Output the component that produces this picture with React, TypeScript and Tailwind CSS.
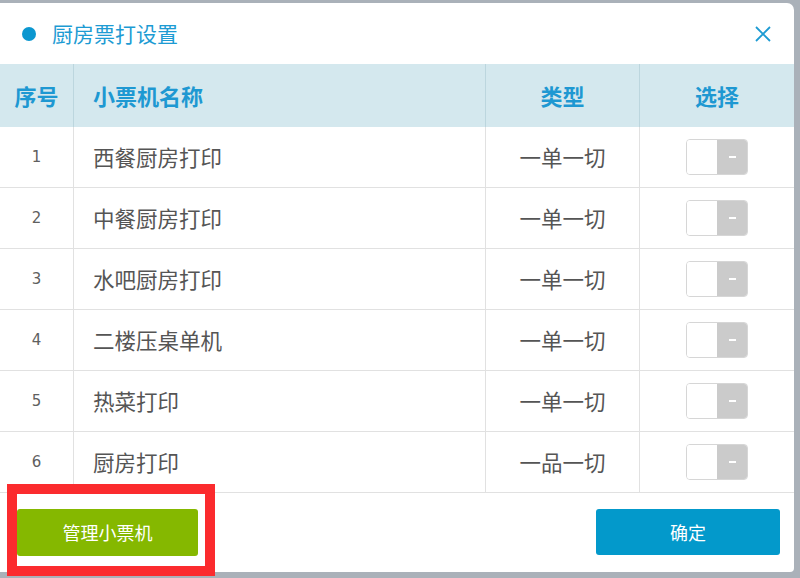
import React from "react";

const rows = [
  { n: "1", name: "西餐厨房打印", type: "一单一切" },
  { n: "2", name: "中餐厨房打印", type: "一单一切" },
  { n: "3", name: "水吧厨房打印", type: "一单一切" },
  { n: "4", name: "二楼压桌单机", type: "一单一切" },
  { n: "5", name: "热菜打印", type: "一单一切" },
  { n: "6", name: "厨房打印", type: "一品一切" },
];

const cjk = { fontFamily: '"Noto Sans CJK SC", "Noto Sans", sans-serif' };
const num = { fontFamily: '"DejaVu Sans", "Noto Sans CJK SC", sans-serif' };

function Toggle() {
  return (
    <div className="flex h-[36px] w-[62px] overflow-hidden rounded-[4px] border border-[#d6d6d6]">
      <div className="w-[30px] bg-white" />
      <div className="flex flex-1 items-center justify-center bg-[#cbcbcb]">
        <div className="h-[2px] w-[7px] bg-white" />
      </div>
    </div>
  );
}

export default function App() {
  return (
    <div className="relative h-[578px] w-[800px] overflow-hidden bg-[#aab1b9]" style={cjk}>
      <div className="pt-[3px]">
        <div className="flex h-[569px] w-[794px] flex-col overflow-hidden rounded-tr-[7px] rounded-br-[4px] bg-white">
          {/* header */}
          <div className="flex h-[61px] items-center pl-[22px] pr-[20px]">
            <div className="h-[14px] w-[14px] rounded-full bg-[#0b97d0]" />
            <div className="ml-[16px] text-[21px] leading-none text-[#1d9bd3]">厨房票打设置</div>
            <div className="flex-1" />
            <svg width="18" height="18" viewBox="0 0 18 18" className="mr-[2px]">
              <path d="M2 2 L16 16 M16 2 L2 16" stroke="#1d9bd3" strokeWidth="1.8" />
            </svg>
          </div>
          {/* table head */}
          <div className="grid h-[63px] grid-cols-[74px_412px_154px_154px] bg-[#d4e8ee] text-[22px] font-bold text-[#1e98d2]">
            <div className="flex items-center justify-center border-r border-[#bcd6de]">序号</div>
            <div className="flex items-center border-r border-[#bcd6de] pl-[19px]">小票机名称</div>
            <div className="flex items-center justify-center border-r border-[#bcd6de]">类型</div>
            <div className="flex items-center justify-center">选择</div>
          </div>
          {rows.map((r) => (
            <div
              key={r.n}
              className="grid h-[61px] grid-cols-[74px_412px_154px_154px] border-b border-[#e1e1e1] text-[#555555]"
            >
              <div className="flex items-center justify-center border-r border-[#e1e1e1] text-[15px] text-[#606060]" style={num}>
                {r.n}
              </div>
              <div className="flex items-center border-r border-[#e1e1e1] pl-[19px] text-[21.5px]">{r.name}</div>
              <div className="flex items-center justify-center border-r border-[#e1e1e1] text-[21.5px]">{r.type}</div>
              <div className="flex items-center justify-center">
                <Toggle />
              </div>
            </div>
          ))}
          {/* footer */}
          <div className="flex flex-1 items-start justify-between pl-[17px] pr-[14px] pt-[16px]">
            <button className="flex h-[47px] w-[181px] items-center justify-center rounded-[3px] bg-[#85b800] text-[18px] text-white">
              管理小票机
            </button>
            <button className="flex h-[46px] w-[184px] items-center justify-center rounded-[3px] bg-[#0399cb] text-[18px] text-white">
              确定
            </button>
          </div>
        </div>
      </div>
      {/* red annotation box */}
      <div className="absolute left-[7px] top-[484px] h-[92px] w-[208px] border-[10px] border-[#fb2b2e]" />
    </div>
  );
}
